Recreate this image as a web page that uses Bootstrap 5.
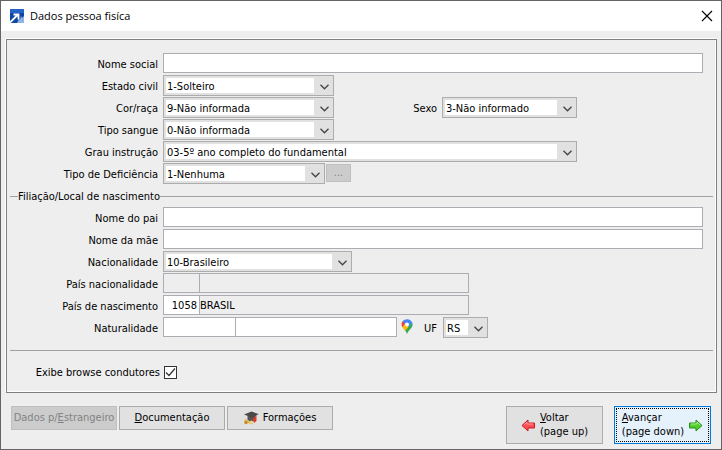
<!DOCTYPE html>
<html lang="pt-BR">
<head>
<meta charset="utf-8">
<meta name="viewport" content="width=device-width, initial-scale=1">
<title>Dados pessoa fisíca</title>
<link href="https://cdn.jsdelivr.net/npm/bootstrap@5.3.0/dist/css/bootstrap.min.css" rel="stylesheet">
<style>
  body { background: #eee; color: #000; font-family: "DejaVu Sans Condensed", sans-serif; font-size: 11px; line-height: 14px; }
  .dialog { border: 1px solid #646464; background: #eee; }
  .titlebar { height: 30px; padding: 0 8px 0 9px; gap: 6px; font-family: "Open Sans", sans-serif; font-size: 11px; }
  .close-btn { width: 12px; height: 12px; }
  .frame { margin: 8px 4px 0 5px; padding: 13px 13px 13px 0; border: 1px solid #808080; box-shadow: inset -1px -1px #fff, -1px -1px #fff; }
  .form-line { height: 22px; }
  .form-line > label:first-child { width: 151px; margin-right: 5px; text-align: right; }
  .form-line label { line-height: 23px; white-space: nowrap; }
  .field { height: 20px; border: 1px solid #abadb3; border-radius: 0; background: #fff; padding: 1px 0 0; font-size: inherit; line-height: 17px; color: #000; min-width: 0; }
  .field:read-only { background: #eee; }
  .field + .field { margin-left: -1px; }
  .code-field { padding-right: 2px; text-align: right; }
  .combo { height: 21px; border: 1px solid #acacac; border-radius: 0; padding: 2px 20px 0 3px; font-size: inherit; line-height: 17px; color: #000; appearance: none;
    background-color: #e1e1e1;
    background-image: url("data:image/svg+xml,%3Csvg xmlns='http://www.w3.org/2000/svg' width='9' height='6'%3E%3Cpath d='M.5 .8l4 4 4-4' fill='none' stroke='%23444' stroke-width='1.3'/%3E%3C/svg%3E"), linear-gradient(#fff, #fff);
    background-repeat: no-repeat; background-position: right 4px top 8px, 2px 2px; background-size: 9px 6px, calc(100% - 21px) calc(100% - 4px); }
  .w-std { width: 171px; } .w-sexo { width: 135px; } .w-grau { width: 414px; } .w-def { width: 162px; }
  .w-nac { width: 189px; } .w-code { width: 37px; } .w-country { width: 270px; } .w-city { width: 73px; } .w-name { width: 162px; } .w-uf { width: 45px; }
  .sexo-col { width: 108px; padding-right: 5px; text-align: right; }
  .uf-col { width: 30px; padding-right: 6px; text-align: right; }
  .pin { margin: 2px 0 0 4px; }
  .more-btn { width: 25px; height: 18px; margin: 1px 0 0 1px; }
  .flat-btn { border: 1px solid #acacac; border-radius: 0; background: #e1e1e1; color: #000; padding: 0; font-size: inherit; line-height: 14px; white-space: nowrap; }
  .flat-btn:disabled { background: #ccc; border-color: #bfbfbf; color: #838383; opacity: 1; }
  .section-title { margin: 5px -10px 4px 3px; height: 13px; }
  .section-title::before, .section-title::after { content: ""; height: 1px; background: #a0a0a0; }
  .section-title::before { width: 8px; }
  .section-title::after { flex: 1; }
  .divider { height: 1px; margin: 11px -10px 15px 3px; background: #a0a0a0; }
  .check-label { width: 153px; margin-right: 4px; text-align: right; line-height: 13px; }
  .tick { width: 13px; height: 13px; margin: 0; }
  .tick[type=checkbox] { border: 1px solid #333; border-radius: 0; }
  .tick:checked[type=checkbox] { background: #fff url("data:image/svg+xml,%3Csvg xmlns='http://www.w3.org/2000/svg' viewBox='0 0 11 11'%3E%3Cpath d='M1 5.500l3 3 6-7' fill='none' stroke='%23333' stroke-width='1.2'/%3E%3C/svg%3E") center/11px 11px no-repeat; }
  .footer { padding: 13px 10px 5px 10px; }
  .group-nav { gap: 2px; }
  .group-go { gap: 11px; }
  .btn-small { width: 106px; height: 24px; }
  .btn-big { width: 97px; height: 38px; }
  .go { border-color: #0078d7; background: #e5f1fb; outline: 1px dotted #000; outline-offset: -3px; }
</style>
</head>
<body>
<main class="dialog min-vh-100">
  <header class="titlebar bg-white d-flex align-items-center">
    <svg width="14" height="14" viewBox="0 0 14 14" aria-hidden="true"><path fill="#0d47a1" d="M0 0h14v14H0z"/><path fill="#2563c4" d="M0 0h14v4H0z"/><path d="M7 14l2-4 1 1 1-4 1 2 2-2v7z" fill="#8fb3e6"/><path d="M0 13.500l7.500-7.500M3.500 5.500H8.500v5" fill="none" stroke="#fff" stroke-width="1.800"/></svg>
    <span>Dados pessoa fisíca</span>
    <button type="button" class="close-btn btn p-0 border-0 d-flex ms-auto" aria-label="Fechar"><svg width="12" height="12" viewBox="0 0 12 12"><path d="M1 1l10 10M11 1L1 11" stroke="#000" stroke-width="1.1"/></svg></button>
  </header>
  <form>
    <div class="frame">
      <div class="form-line d-flex"><label for="social">Nome social</label><input id="social" class="field flex-grow-1"></div>
      <div class="form-line d-flex"><label for="civil">Estado civil</label><select id="civil" class="combo w-std"><option>1-Solteiro</option></select></div>
      <div class="form-line d-flex"><label for="cor">Cor/raça</label><select id="cor" class="combo w-std"><option>9-Não informada</option></select>
        <label for="sexo" class="sexo-col">Sexo</label><select id="sexo" class="combo w-sexo"><option>3-Não informado</option></select></div>
      <div class="form-line d-flex"><label for="sangue">Tipo sangue</label><select id="sangue" class="combo w-std"><option>0-Não informada</option></select></div>
      <div class="form-line d-flex"><label for="grau">Grau instrução</label><select id="grau" class="combo w-grau"><option>03-5º ano completo do fundamental</option></select></div>
      <div class="form-line d-flex"><label for="defic">Tipo de Deficiência</label><select id="defic" class="combo w-def"><option>1-Nenhuma</option></select><button type="button" class="flat-btn more-btn" disabled>...</button></div>
      <div class="section-title d-flex align-items-center">Filiação/Local de nascimento</div>
      <div class="form-line d-flex"><label for="pai">Nome do pai</label><input id="pai" class="field flex-grow-1"></div>
      <div class="form-line d-flex"><label for="mae">Nome da mãe</label><input id="mae" class="field flex-grow-1"></div>
      <div class="form-line d-flex"><label for="nac">Nacionalidade</label><select id="nac" class="combo w-nac"><option>10-Brasileiro</option></select></div>
      <div class="form-line d-flex"><label for="pnac">País nacionalidade</label><input id="pnac" class="field w-code" readonly><input class="field w-country" readonly aria-label="Nome do país de nacionalidade"></div>
      <div class="form-line d-flex"><label for="pnasc">País de nascimento</label><input id="pnasc" class="field code-field w-code" value="1058"><input class="field w-country" readonly value="BRASIL" aria-label="Nome do país de nascimento"></div>
      <div class="form-line d-flex"><label for="nat">Naturalidade</label><input id="nat" class="field w-city"><input class="field w-name" aria-label="Nome da cidade">
        <svg class="pin" width="12" height="15" viewBox="0 0 12 15" aria-hidden="true"><path fill="#34a853" d="M11.200 3.500c.8 2 .3 4-1 5.500C8.500 11 7 12.500 6 15c-.5-1.500-1-2.600-2-3.800z"/><path fill="#fbbc04" d="M1.300 8L4 4.500 8 7.500 4 11.800C3 10.200 1.800 9.200 1.300 8z"/><path fill="#ea4335" d="M1.500 2.300L4.300 4.600 1.300 8.300C.1 6 .4 3.800 1.500 2.300z"/><path fill="#4285f4" d="M1.500 2.300C4-.9 9.500-.6 11.200 3.500L7.500 8 4 4.500z"/><circle cx="6" cy="5.500" r="2" fill="#fff"/></svg>
        <label for="uf" class="uf-col">UF</label><select id="uf" class="combo w-uf"><option>RS</option></select></div>
      <div class="divider"></div>
      <div class="d-flex align-items-center"><label for="exibe" class="check-label">Exibe browse condutores</label><input type="checkbox" id="exibe" class="form-check-input tick" checked></div>
    </div>
    <footer class="footer d-flex justify-content-between align-items-start">
      <div class="d-flex group-nav">
        <button type="button" class="flat-btn btn-small" disabled>Dados p/<u>E</u>strangeiro</button>
        <button type="button" class="flat-btn btn-small"><u>D</u>ocumentação</button>
        <button type="button" class="flat-btn btn-small d-flex align-items-center justify-content-center gap-1"><svg width="15" height="14" viewBox="0 0 15 14" aria-hidden="true"><path d="M3.500 5h8v4.500l-4 1.500-4-2z" fill="#555"/><path d="M0 3.500L7.500.5l7 2.500-5.500 4z" fill="#4a4a4a"/><path d="M9 7l3.500-2v5L10 12z" fill="#e23a25"/><path d="M1 8l8 4-1 1.500L0 10z" fill="#e8b850"/><circle cx="2" cy="11.500" r="1.700" fill="#c98a20"/><circle cx="7.500" cy="11" r="1.500" fill="#f4d68a"/></svg>Formações</button>
      </div>
      <div class="d-flex group-go">
        <button type="button" class="flat-btn btn-big d-flex align-items-center justify-content-center gap-1 text-start"><svg width="15" height="13" viewBox="0 0 15 13" aria-hidden="true"><path d="M1 6.500L7 1v3h6.500v5H7v3z" fill="#ff4d55" stroke="#c81822"/><path d="M3 6l3-3v2h6" fill="none" stroke="#ff9a9e"/></svg><span><u>V</u>oltar<br>(page up)</span></button>
        <button type="button" class="flat-btn btn-big go d-flex align-items-center justify-content-center gap-1 text-start"><span><u>A</u>vançar<br>(page down)</span><svg width="15" height="13" viewBox="0 0 15 13" aria-hidden="true"><path d="M14 6.500L8 1v3H1.500v5H8v3z" fill="#4fd02c" stroke="#2a8a1c"/><path d="M12 6L9 3v2H3" fill="none" stroke="#a5f08a"/></svg></button>
      </div>
    </footer>
  </form>
</main>
<script src="https://cdn.jsdelivr.net/npm/bootstrap@5.3.0/dist/js/bootstrap.bundle.min.js"></script>
</body>
</html>
